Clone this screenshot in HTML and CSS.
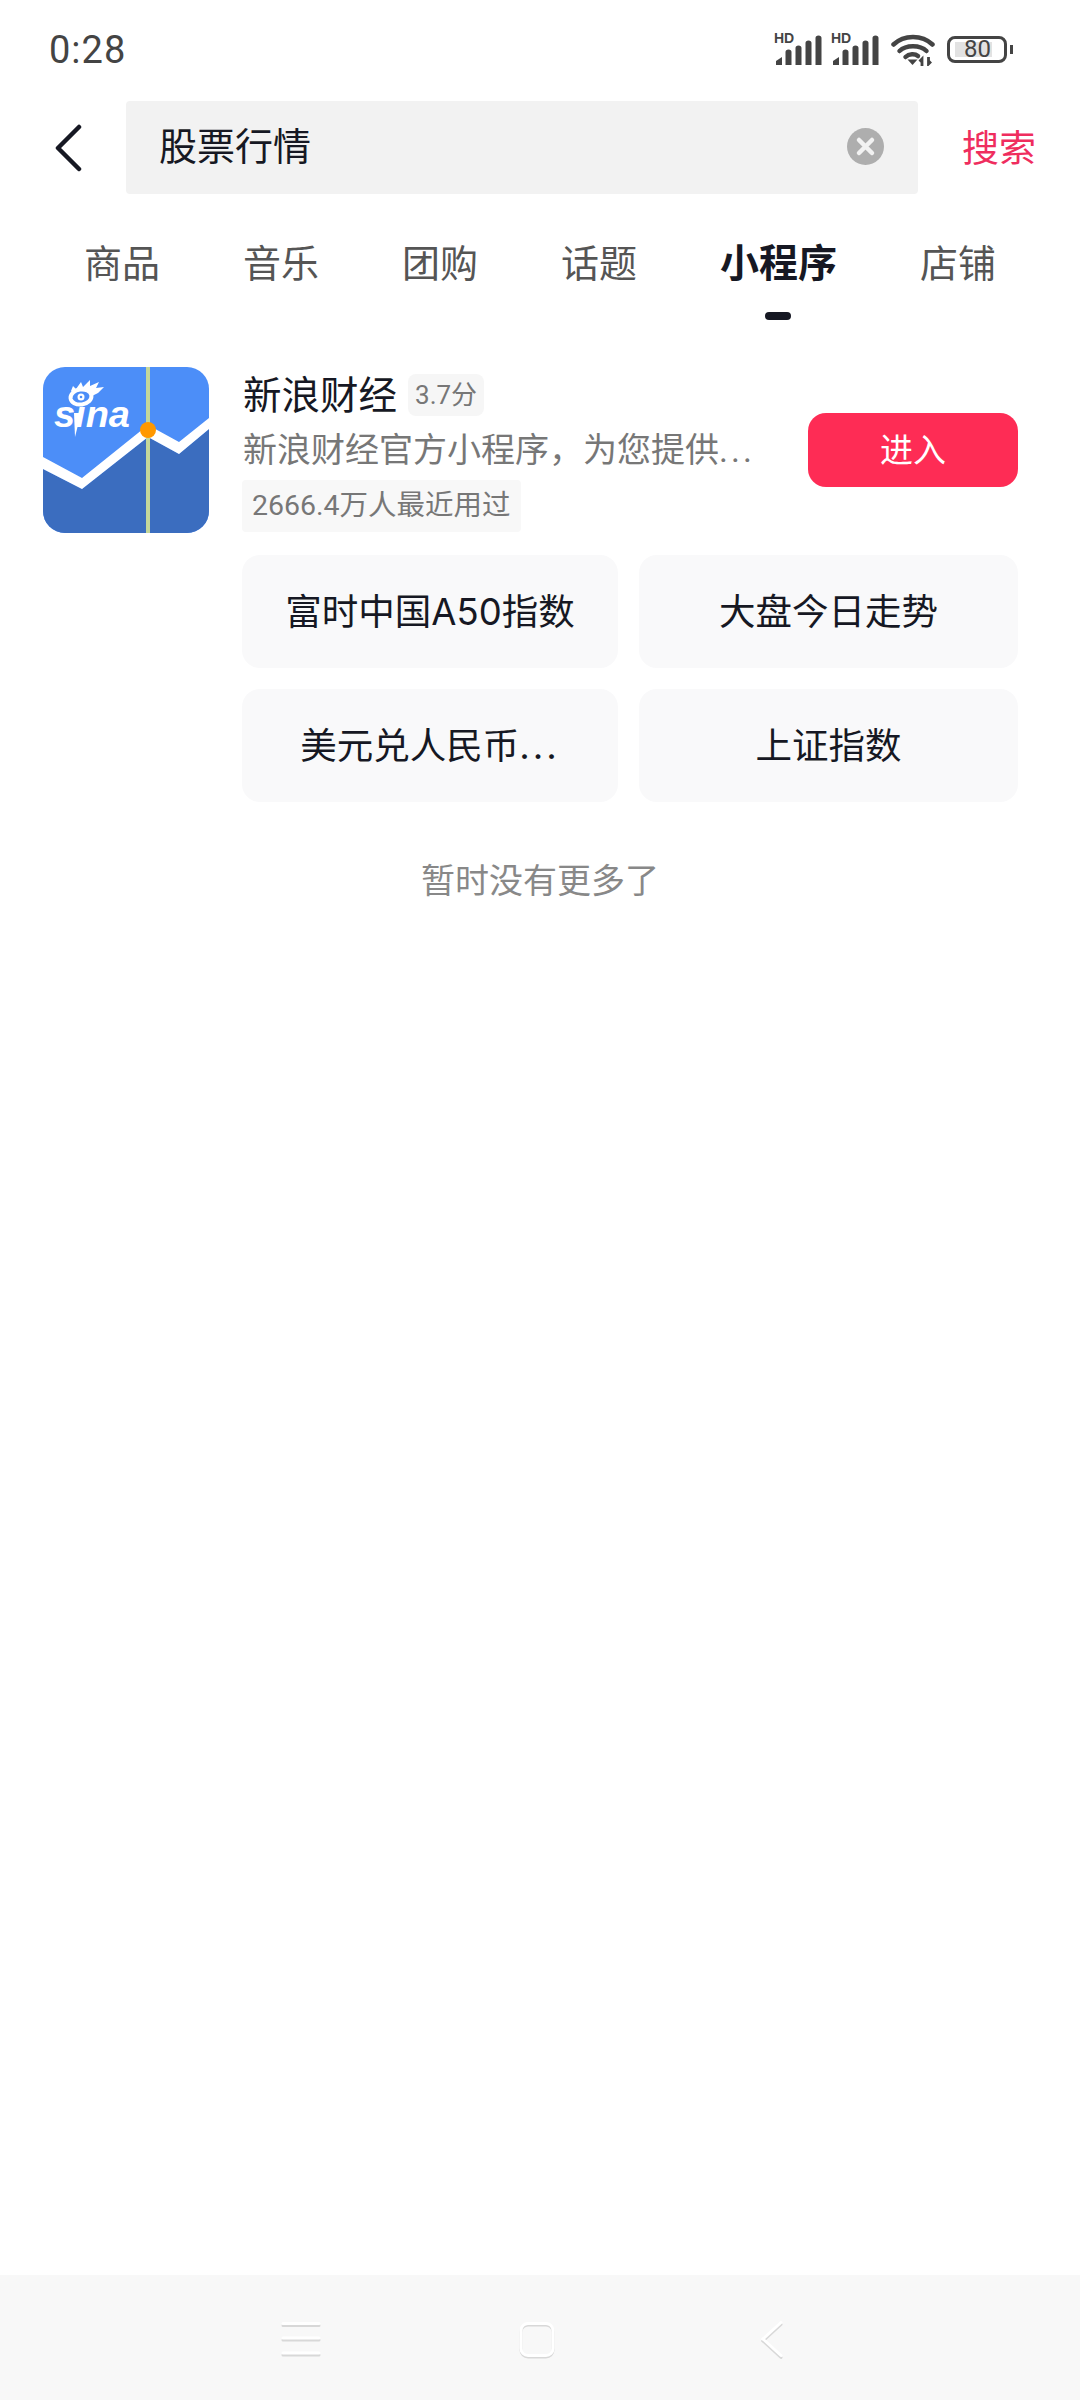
FILE: index.html
```html
<!DOCTYPE html>
<html lang="zh-CN">
<head>
<meta charset="utf-8">
<title>股票行情 - 小程序</title>
<link rel="stylesheet" href="styles.css">
</head>
<body>
<div class="app">
  <div class="status">
    <span class="time">0:28</span>
    <div class="status-icons">
      <div class="signal">
        <span class="hd">HD</span>
        <svg class="bars" width="47" height="30" viewBox="0 0 47 30"><path d="M1 30v-4l6-4v8zM10.500 30V17q0-2.500 3-2.500t3 2.500V30zM20.500 30V13q0-2.500 3-2.500t3 2.500V30zM30.500 30V8q0-2.500 3-2.500t3 2.500v22zM40.500 30V3q0-2.500 3-2.500t3 2.500v27z" fill="#444"/></svg>
      </div>
      <div class="signal">
        <span class="hd">HD</span>
        <svg class="bars" width="47" height="30" viewBox="0 0 47 30"><path d="M1 30v-4l6-4v8zM10.500 30V17q0-2.500 3-2.500t3 2.500V30zM20.500 30V13q0-2.500 3-2.500t3 2.500V30zM30.500 30V8q0-2.500 3-2.500t3 2.500v22zM40.500 30V3q0-2.500 3-2.500t3 2.500v27z" fill="#444"/></svg>
      </div>
      <svg class="wifi" width="44" height="32" viewBox="0 0 44 32"><g fill="none" stroke="#444" stroke-width="4.500" stroke-linecap="round"><path d="M2.500 10.500C13 0.500 31 0.500 41.500 10.500"/><path d="M8.500 17C15 10.500 29 10.500 35.500 17"/><path d="M14.500 23C18 19.500 24 19.500 27 22"/></g><path d="M16.500 25.500h10L21.500 31z" fill="#444"/><path d="M31 32v-7l-2.500 2.500M37.500 23v7l2.500-2.500" fill="none" stroke="#444" stroke-width="2.800"/></svg>
      <div class="battery">
        <div class="battery-body">
          <span class="battery-level">80</span>
        </div>
        <span class="battery-nub"></span>
      </div>
    </div>
  </div>

  <div class="search-row">
    <div class="back">
      <svg width="28" height="48" viewBox="0 0 28 48"><path d="M25 3L4 24l21 21" fill="none" stroke="#161823" stroke-width="4.500" stroke-linecap="round" stroke-linejoin="round"/></svg>
    </div>
    <div class="search-box">
      <span class="query">股票行情</span>
      <svg class="clear" width="37" height="37" viewBox="0 0 37 37"><circle cx="18.500" cy="18.500" r="18.500" fill="#aeaeae"/><path d="M12 12l13 13M25 12L12 25" stroke="#f2f2f2" stroke-width="4.500" stroke-linecap="round"/></svg>
    </div>
    <span class="search-action">搜索</span>
  </div>

  <nav class="tabs">
    <div class="tab">商品</div>
    <div class="tab">音乐</div>
    <div class="tab">团购</div>
    <div class="tab">话题</div>
    <div class="tab active">小程序<span class="tab-mark"></span></div>
    <div class="tab">店铺</div>
  </nav>

  <main class="result">
    <svg class="app-icon" width="166" height="166" viewBox="0 0 166 166">
      <defs><clipPath id="round"><rect width="166" height="166" rx="22"/></clipPath></defs>
      <g clip-path="url(#round)">
        <rect width="166" height="166" fill="#4c8ef8"/>
        <path d="M0 102L39 122 105 70 136 87 166 62V166H0z" fill="#3b6dbf"/>
        <path d="M0 90L39 111 105 58 136 75 166 51V62L136 87 105 70 39 122 0 102z" fill="#fff"/>
        <rect x="103" width="4" height="166" fill="#c4d79a"/>
        <circle cx="105" cy="63" r="8" fill="#ff9800"/>
        <path d="M28 24l2-5 3 3 5-7 2 5 7-7 0 6 9-4-3 6 8-1-6 6-6 3-14 1z" fill="#fff"/>
        <ellipse cx="38" cy="30" rx="12.500" ry="9.500" fill="#fff" transform="rotate(-8 38 30)"/>
        <ellipse cx="38" cy="30" rx="8.500" ry="5.500" fill="#4c8ef8" transform="rotate(-8 38 30)"/>
        <circle cx="38" cy="30" r="3.500" fill="#fff"/>
        <circle cx="38" cy="30" r="1.300" fill="#4c8ef8"/>
        <path d="M31 46h7l-6 24z" fill="#fff"/>
        <text class="sina" x="11" y="60" textLength="76" lengthAdjust="spacingAndGlyphs">sına</text>
      </g>
    </svg>
    <div class="result-body">
      <div class="result-top">
        <div class="info">
          <div class="title-row">
            <span class="title">新浪财经</span>
            <span class="score">3.7分</span>
          </div>
          <p class="desc">新浪财经官方小程序，为您提供<span class="dots">...</span></p>
          <span class="meta">2666.4万人最近用过</span>
        </div>
        <button class="enter">进入</button>
      </div>
      <div class="chips">
        <div class="chip">富时中国A50指数</div>
        <div class="chip">大盘今日走势</div>
        <div class="chip">美元兑人民币<span class="dots">...</span></div>
        <div class="chip">上证指数</div>
      </div>
    </div>
  </main>

  <p class="end">暂时没有更多了</p>

  <footer class="navbar">
    <svg class="nav-icon" width="40" height="40" viewBox="0 0 40 40"><g fill="none" stroke-linecap="round" stroke-width="3"><path d="M2 5.500h36M2 20h36M2 35h36" stroke="#d8d8d8"/><path d="M2 3.500h36M2 18h36M2 33h36" stroke="#fff"/></g></svg>
    <svg class="nav-icon" width="40" height="40" viewBox="0 0 40 40"><rect x="4" y="5" width="32" height="32" rx="7" fill="none" stroke="#d8d8d8" stroke-width="3"/><rect x="4" y="3.500" width="32" height="32" rx="7" fill="none" stroke="#fff" stroke-width="3"/></svg>
    <svg class="nav-icon" width="40" height="40" viewBox="0 0 40 40"><path d="M28 4.500L10 21l18 16.500" fill="none" stroke="#d8d8d8" stroke-width="3" stroke-linecap="round"/><path d="M28 2.500L10 19l18 16.500" fill="none" stroke="#fff" stroke-width="3" stroke-linecap="round"/></svg>
  </footer>
</div>
</body>
</html>
```

FILE: styles.css
```css
* { box-sizing: border-box; }
html, body { margin: 0; padding: 0; background: #fff; }
body { font-family: Roboto, "Noto Sans CJK SC", "Noto Sans", sans-serif; color: #161823; }
p { margin: 0; }

.app { width: 1080px; height: 2400px; display: flex; flex-direction: column; overflow: hidden; }

/* status bar */
.status { height: 101px; padding: 0 67px 2px 49px; display: flex; align-items: center; justify-content: space-between; }
.time { font-size: 38px; color: #444; letter-spacing: 1px; }
.status-icons { display: flex; align-items: center; }
.signal { position: relative; width: 47px; height: 30px; margin-right: 10px; }
.hd { position: absolute; left: -1px; top: -4px; font: 700 14px/14px "Liberation Sans", sans-serif; color: #444; }
.bars { display: block; }
.wifi { margin: 0 12px 0 2px; }
.battery { display: flex; align-items: center; gap: 3px; }
.battery-body { width: 60px; height: 27px; border: 3px solid #444; border-radius: 8px; padding: 3px 0 3px 5px; display: flex; }
.battery-level { width: 37px; background: #e2e2e2; font-size: 24px; line-height: 15px; color: #444; text-align: right; padding-right: 1px; }
.battery-nub { width: 3px; height: 9px; background: #444; }

/* search */
.search-row { height: 93px; display: flex; align-items: center; }
.back { width: 126px; padding-left: 54px; display: flex; }
.search-box { width: 792px; height: 93px; background: #f2f2f2; border-radius: 4px; padding: 0 34px 2px 33px; display: flex; align-items: center; justify-content: space-between; }
.query { font-size: 38px; line-height: 93px; color: #161823; position: relative; top: 1px; }
.search-action { margin: 0 0 3px 44px; font-size: 37px; color: #ef2d5e; }

/* tabs */
.tabs { display: flex; gap: 83px; padding: 42px 0 0 84px; }
.tab { position: relative; font-size: 38px; line-height: 56px; color: #555; }
.tab.active { font-size: 39px; font-weight: 700; color: #161823; }
.tab-mark { position: absolute; left: 45px; top: 76px; width: 26px; height: 8px; border-radius: 4px; background: #161823; }

/* result */
.result { display: flex; gap: 33px; padding: 75px 62px 0 43px; }
.app-icon { flex: none; display: block; }
.result-body { flex: 1; min-width: 0; }
.result-top { display: flex; justify-content: space-between; align-items: center; }
.info { display: flex; flex-direction: column; align-items: flex-start; }
.title-row { margin: 7px 0 0 1px; height: 42px; display: flex; align-items: center; gap: 11px; }
.title { font-size: 38.500px; line-height: 42px; color: #161823; position: relative; top: 1px; }
.score { height: 42px; padding: 0 7px; border-radius: 8px; background: #f6f6f6; font-size: 26px; line-height: 42px; color: #777; }
.desc { margin: 9px 0 5px 1px; font-size: 34px; line-height: 50px; color: #777; }
.dots { letter-spacing: 3px; }
.meta { height: 52px; padding: 0 10px; background: #f8f8f8; border-radius: 4px; font-size: 28.500px; line-height: 52px; color: #777; }
.enter { width: 210px; height: 74px; border: 0; border-radius: 18px; background: #fe2c55; color: #fff; font: 400 33px/74px Roboto, "Noto Sans CJK SC", sans-serif; }

.sina { font: italic 700 36px "Liberation Sans", sans-serif; fill: #fff; }

.chips { margin-top: 23px; display: grid; grid-template-columns: 376px 1fr; gap: 21px; }
.chip { height: 113px; padding-top: 1px; border-radius: 18px; background: #f9f9fa; font-family: Inter, "Noto Sans CJK SC", sans-serif; font-size: 36.500px; line-height: 113px; text-align: center; color: #161823; }

.end { margin-top: 52px; font-size: 34px; line-height: 54px; text-align: center; color: #888; }

/* system navigation */
.navbar { margin-top: auto; height: 125px; background: #f8f8f8; display: flex; align-items: flex-start; padding: 45px 0 0 281px; gap: 196px; }
.nav-icon { display: block; }
```
